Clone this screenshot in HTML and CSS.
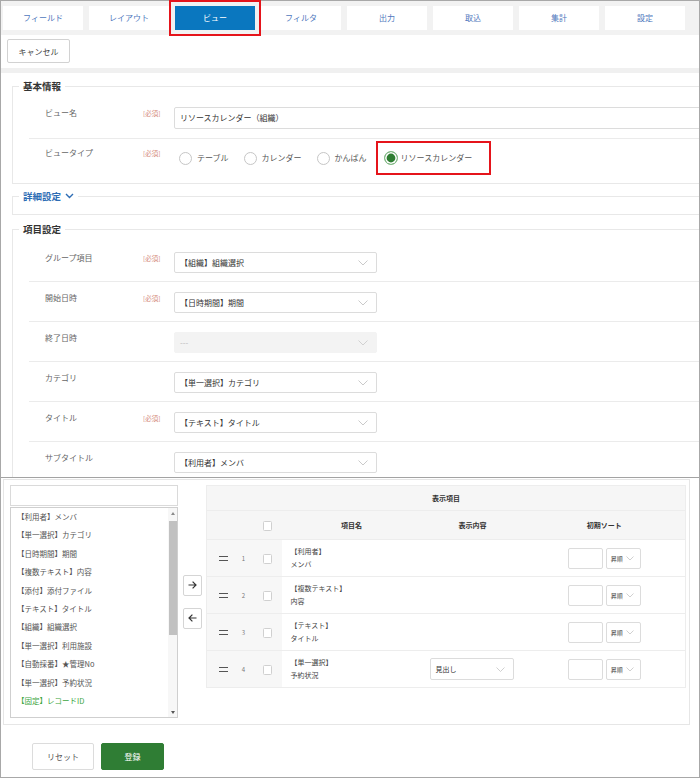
FILE: index.html
```html
<!DOCTYPE html>
<html lang="ja">
<head>
<meta charset="utf-8">
<title>ビュー設定</title>
<link rel="stylesheet" href="styles.css">
</head>
<body>
<div class="frame">
  <div class="upper">
    <nav class="tabs">
      <a class="tab">フィールド</a>
      <a class="tab">レイアウト</a>
      <a class="tab active">ビュー</a>
      <a class="tab">フィルタ</a>
      <a class="tab">出力</a>
      <a class="tab">取込</a>
      <a class="tab">集計</a>
      <a class="tab">設定</a>
    </nav>
    <div class="toolbar"><button class="btn cancel">キャンセル</button></div>
    <div class="content">
      <fieldset class="group basic">
        <legend>基本情報</legend>
        <div class="row">
          <div class="label">ビュー名</div>
          <div class="req">[必須]</div>
          <div class="field">リソースカレンダー（組織）</div>
        </div>
        <div class="row">
          <div class="label">ビュータイプ</div>
          <div class="req">[必須]</div>
          <div class="radios">
            <span class="radio-item"><span class="radio"></span>テーブル</span>
            <span class="radio-item"><span class="radio"></span>カレンダー</span>
            <span class="radio-item"><span class="radio"></span>かんばん</span>
            <span class="radio-item marked"><span class="radio on"></span>リソースカレンダー</span>
          </div>
        </div>
      </fieldset>
      <fieldset class="group collapsed">
        <legend class="link">詳細設定 <svg class="legend-chev" width="9" height="6" viewBox="0 0 9 6"><path d="M1 1L4.5 4.5L8 1" fill="none" stroke="#2d6cb4" stroke-width="1.4"/></svg></legend>
      </fieldset>
      <fieldset class="group items">
        <legend>項目設定</legend>
        <div class="row">
          <div class="label">グループ項目</div>
          <div class="req">[必須]</div>
          <div class="select"><span>【組織】組織選択</span><svg width="10" height="6" viewBox="0 0 10 6"><path d="M0.5 0.5L5 5L9.5 0.5" fill="none" stroke="#bdbdbd" stroke-width="0.8"/></svg></div>
        </div>
        <div class="row">
          <div class="label">開始日時</div>
          <div class="req">[必須]</div>
          <div class="select"><span>【日時期間】期間</span><svg width="10" height="6" viewBox="0 0 10 6"><path d="M0.5 0.5L5 5L9.5 0.5" fill="none" stroke="#bdbdbd" stroke-width="0.8"/></svg></div>
        </div>
        <div class="row">
          <div class="label">終了日時</div>
          <div class="req"></div>
          <div class="select disabled"><span>---</span><svg width="10" height="6" viewBox="0 0 10 6"><path d="M0.5 0.5L5 5L9.5 0.5" fill="none" stroke="#c8c8c8" stroke-width="0.8"/></svg></div>
        </div>
        <div class="row">
          <div class="label">カテゴリ</div>
          <div class="req"></div>
          <div class="select"><span>【単一選択】カテゴリ</span><svg width="10" height="6" viewBox="0 0 10 6"><path d="M0.5 0.5L5 5L9.5 0.5" fill="none" stroke="#bdbdbd" stroke-width="0.8"/></svg></div>
        </div>
        <div class="row">
          <div class="label">タイトル</div>
          <div class="req">[必須]</div>
          <div class="select"><span>【テキスト】タイトル</span><svg width="10" height="6" viewBox="0 0 10 6"><path d="M0.5 0.5L5 5L9.5 0.5" fill="none" stroke="#bdbdbd" stroke-width="0.8"/></svg></div>
        </div>
        <div class="row">
          <div class="label">サブタイトル</div>
          <div class="req"></div>
          <div class="select"><span>【利用者】メンバ</span><svg width="10" height="6" viewBox="0 0 10 6"><path d="M0.5 0.5L5 5L9.5 0.5" fill="none" stroke="#bdbdbd" stroke-width="0.8"/></svg></div>
        </div>
      </fieldset>
    </div>
  </div>

  <div class="lower">
    <div class="card">
      <div class="picker">
        <div class="search"></div>
        <div class="listbox">
          <div class="list">
            <div class="item">【利用者】メンバ</div>
            <div class="item">【単一選択】カテゴリ</div>
            <div class="item">【日時期間】期間</div>
            <div class="item">【複数テキスト】内容</div>
            <div class="item">【添付】添付ファイル</div>
            <div class="item">【テキスト】タイトル</div>
            <div class="item">【組織】組織選択</div>
            <div class="item">【単一選択】利用施設</div>
            <div class="item">【自動採番】★管理No</div>
            <div class="item">【単一選択】予約状況</div>
            <div class="item fixed">【固定】レコードID</div>
          </div>
          <div class="scrollbar">
            <span class="sb-up"></span>
            <span class="sb-track"><span class="sb-thumb"></span></span>
            <span class="sb-down"></span>
          </div>
        </div>
      </div>
      <div class="movers">
        <button class="move"><svg width="9" height="8" viewBox="0 0 9 8"><path d="M0.5 4H8M4.6 0.6L8 4L4.6 7.4" fill="none" stroke="#333" stroke-width="1.2"/></svg></button>
        <button class="move"><svg width="9" height="8" viewBox="0 0 9 8"><path d="M8.5 4H1M4.4 0.6L1 4L4.4 7.4" fill="none" stroke="#333" stroke-width="1.2"/></svg></button>
      </div>
      <table class="cols">
        <colgroup>
          <col class="c-grip"><col class="c-num"><col class="c-chk"><col class="c-name"><col class="c-disp"><col class="c-sort">
        </colgroup>
        <thead>
          <tr class="h1"><th colspan="6">表示項目</th></tr>
          <tr class="h2"><th></th><th></th><th><span class="cb"></span></th><th>項目名</th><th>表示内容</th><th>初期ソート</th></tr>
        </thead>
        <tbody>
          <tr>
            <td class="grip"><span class="grip-icon"></span></td><td class="num">1</td><td class="chk"><span class="cb"></span></td>
            <td class="name">【利用者】<br>メンバ</td><td class="disp"></td>
            <td class="sort"><div class="sort-box"><span class="sort-in"></span><span class="sort-sel">昇順<svg width="8" height="5" viewBox="0 0 8 5"><path d="M0.5 0.5L4 4L7.5 0.5" fill="none" stroke="#c4c4c4" stroke-width="0.8"/></svg></span></div></td>
          </tr>
          <tr>
            <td class="grip"><span class="grip-icon"></span></td><td class="num">2</td><td class="chk"><span class="cb"></span></td>
            <td class="name">【複数テキスト】<br>内容</td><td class="disp"></td>
            <td class="sort"><div class="sort-box"><span class="sort-in"></span><span class="sort-sel">昇順<svg width="8" height="5" viewBox="0 0 8 5"><path d="M0.5 0.5L4 4L7.5 0.5" fill="none" stroke="#c4c4c4" stroke-width="0.8"/></svg></span></div></td>
          </tr>
          <tr>
            <td class="grip"><span class="grip-icon"></span></td><td class="num">3</td><td class="chk"><span class="cb"></span></td>
            <td class="name">【テキスト】<br>タイトル</td><td class="disp"></td>
            <td class="sort"><div class="sort-box"><span class="sort-in"></span><span class="sort-sel">昇順<svg width="8" height="5" viewBox="0 0 8 5"><path d="M0.5 0.5L4 4L7.5 0.5" fill="none" stroke="#c4c4c4" stroke-width="0.8"/></svg></span></div></td>
          </tr>
          <tr>
            <td class="grip"><span class="grip-icon"></span></td><td class="num">4</td><td class="chk"><span class="cb"></span></td>
            <td class="name">【単一選択】<br>予約状況</td>
            <td class="disp"><div class="disp-sel"><span>見出し</span><svg width="9" height="5" viewBox="0 0 9 5"><path d="M0.5 0.5L4.5 4.5L8.5 0.5" fill="none" stroke="#c4c4c4" stroke-width="0.8"/></svg></div></td>
            <td class="sort"><div class="sort-box"><span class="sort-in"></span><span class="sort-sel">昇順<svg width="8" height="5" viewBox="0 0 8 5"><path d="M0.5 0.5L4 4L7.5 0.5" fill="none" stroke="#c4c4c4" stroke-width="0.8"/></svg></span></div></td>
          </tr>
        </tbody>
      </table>
    </div>
    <div class="actions">
      <button class="btn reset">リセット</button>
      <button class="btn primary">登録</button>
    </div>
  </div>
</div>
</body>
</html>
```

FILE: styles.css
```css
* { box-sizing: border-box; }
html, body { margin: 0; padding: 0; background: #fff; }
body {
  font-family: "Noto Sans CJK JP", "Noto Sans", sans-serif;
  font-size: 8px;
  color: #444;
}

.frame {
  width: 700px;
  height: 778px;
  border: 1px solid #a8a8a8;
  background: #fff;
}

.upper {
  height: 477px;
  border-bottom: 1px solid #a3a3a3;
  display: flex;
  flex-direction: column;
}

/* tabs */
.tabs {
  display: flex;
  gap: 6px;
  height: 34px;
  padding: 5px 0 0 2px;
  background: #f2f2f2;
  flex: none;
}
.tab {
  width: 80px;
  height: 24px;
  line-height: 24px;
  background: #fff;
  color: #4f78bd;
  text-align: center;
  font-size: 8px;
}
.tab.active {
  background: #0a77bf;
  color: #fff;
  outline: 2px solid #e5141b;
  outline-offset: 4px;
}

/* toolbar */
.toolbar {
  height: 33px;
  padding: 4px 6px;
  flex: none;
}
.btn {
  font-family: inherit;
  font-size: 8px;
  background: #fff;
  border: 1px solid #d2d2d2;
  border-radius: 2px;
  color: #444;
  padding: 0;
  cursor: pointer;
}
.btn.cancel { width: 63px; height: 24px; }

/* content */
.content {
  flex: 1;
  border-top: 5px solid #f0f0f0;
  padding-left: 11px;
  overflow: hidden;
}

.group {
  margin: 6px 0 0;
  padding: 6px 0 5px;
  border: 1px solid #e8e8e8;
  width: 760px;
  min-width: 0;
}
.group legend {
  margin-left: 6px;
  padding: 0 4px;
  font-size: 9.5px;
  font-weight: 700;
  line-height: 14px;
  color: #333;
}
.group.collapsed { margin-top: 5px; padding: 0 0 11px; }
.group.items { margin-top: 7px; }
.group legend.link { color: #2d6cb4; }
.legend-chev { margin-left: 2px; vertical-align: 1px; }

.row {
  display: flex;
  align-items: flex-start;
  margin-left: 16px;
  padding: 8px 0 9px;
}
.row + .row { border-top: 1px solid #ebebeb; }
.items .row { padding: 10px 0 8px; }

.label {
  width: 114px;
  padding-left: 16px;
  line-height: 12px;
  color: #666;
  flex: none;
}
.req {
  width: 31px;
  font-size: 6.5px;
  line-height: 12px;
  color: #d48a7b;
  flex: none;
}
.field {
  width: 540px;
  height: 22px;
  border: 1px solid #dcdcdc;
  border-radius: 2px;
  padding: 0 5px;
  line-height: 20px;
  color: #333;
  flex: none;
}

.radios {
  display: flex;
  align-items: center;
  height: 22px;
  padding-left: 5px;
  color: #555;
}
.radio-item {
  display: flex;
  align-items: center;
  margin-right: 15px;
  line-height: 14px;
}
.radio {
  width: 13px;
  height: 13px;
  border: 1px solid #c6c6c6;
  border-radius: 50%;
  background: #fff;
  margin-right: 5px;
}
.radio.on {
  width: 14px;
  height: 14px;
  border: 1px solid #86bd89;
  background: #2e7d32;
  box-shadow: inset 0 0 0 1.6px #fff;
  margin-right: 3px;
}
.radio-item.marked { position: relative; margin-left: 2px; }
.radio-item.marked::after {
  content: "";
  position: absolute;
  left: -8px;
  right: -19px;
  top: -10px;
  bottom: -10px;
  border: 2px solid #e5141b;
}

.select {
  width: 203px;
  height: 21px;
  border: 1px solid #dcdcdc;
  border-radius: 2px;
  display: flex;
  align-items: center;
  justify-content: space-between;
  padding: 0 8px 0 5px;
  color: #333;
  flex: none;
}
.select.disabled {
  background: #f3f3f3;
  border-color: #f3f3f3;
  color: #bbb;
}

/* lower area */
.lower { height: 299px; }
.card {
  margin: 1px 9px 0 2px;
  border: 1px solid #e6e6e6;
  padding: 5px 4px 6px 6px;
  display: flex;
  align-items: flex-start;
}

.picker { width: 168px; flex: none; }
.search {
  height: 21px;
  border: 1px solid #dadada;
}
.listbox {
  margin-top: 1px;
  height: 211px;
  border: 1px solid #cfcfcf;
  display: flex;
}
.list { flex: 1; padding-left: 6px; }
.item {
  line-height: 18.4px;
  font-size: 7.5px;
  color: #555;
  white-space: nowrap;
}
.item.fixed { color: #3da63f; }

.scrollbar {
  width: 9px;
  display: flex;
  flex-direction: column;
  align-items: center;
  background: #f7f7f7;
}
.sb-up, .sb-down {
  height: 10px;
  width: 9px;
  display: flex;
  align-items: center;
  justify-content: center;
}
.sb-up::before {
  content: "";
  border-left: 2.5px solid transparent;
  border-right: 2.5px solid transparent;
  border-bottom: 3px solid #8a8a8a;
}
.sb-down::before {
  content: "";
  border-left: 2.5px solid transparent;
  border-right: 2.5px solid transparent;
  border-top: 3px solid #555;
}
.sb-track { flex: 1; width: 9px; padding-top: 3px; }
.sb-thumb {
  display: block;
  width: 8px;
  margin: 0 auto;
  height: 114px;
  background: #c1c1c1;
}

.movers {
  align-self: center;
  margin-left: 5px;
  width: 19px;
  display: flex;
  flex-direction: column;
  gap: 12px;
  flex: none;
}
.move {
  width: 19px;
  height: 21px;
  border: 1px solid #d5d5d5;
  border-radius: 2px;
  background: #fff;
  padding: 0;
  display: flex;
  align-items: center;
  justify-content: center;
}

.cols {
  margin-left: 4px;
  width: 479px;
  border-collapse: collapse;
  table-layout: fixed;
  border: 1px solid #ededed;
  font-size: 7px;
  flex: none;
}
.c-grip { width: 27px; }
.c-num { width: 20px; }
.c-chk { width: 28px; }
.c-name { width: 140px; }
.c-disp { width: 102px; }
.c-sort { width: 162px; }

.cols th {
  background: #f6f6f6;
  font-weight: 700;
  color: #333;
  text-align: center;
  padding: 0;
}
.cols .h1 th { height: 25px; }
.cols .h2 th { height: 29px; border-top: 1px solid #ededed; }
.cols td {
  height: 37px;
  border-top: 1px solid #ededed;
  padding: 0;
  vertical-align: middle;
}
.cols td.grip, .cols td.num, .cols td.chk { background: #f7f7f7; }
.grip { text-align: left; padding-left: 12px !important; }
.grip-icon {
  display: block;
  width: 9px;
  height: 5px;
  border-top: 1.5px solid #555;
  border-bottom: 1.5px solid #555;
}
.num { text-align: center; color: #777; font-size: 6px; }
.chk { text-align: center; }
.cb {
  display: inline-block;
  width: 9px;
  height: 10px;
  border: 1px solid #d0d0d0;
  border-radius: 1.5px;
  background: #fff;
  vertical-align: middle;
}
.name {
  padding-left: 9px !important;
  line-height: 13px;
  color: #444;
}
.disp { padding-left: 8px !important; }
.disp-sel {
  width: 84px;
  height: 22px;
  border: 1px solid #dcdcdc;
  border-radius: 2px;
  display: flex;
  align-items: center;
  justify-content: space-between;
  padding: 0 8px 0 5px;
  color: #333;
}
.sort-box {
  display: flex;
  justify-content: center;
  gap: 3px;
}
.sort-in {
  width: 35px;
  height: 21px;
  border: 1px solid #dcdcdc;
  border-radius: 2px;
}
.sort-sel {
  width: 35px;
  height: 21px;
  border: 1px solid #dcdcdc;
  border-radius: 2px;
  display: flex;
  align-items: center;
  gap: 3px;
  padding-left: 4px;
  font-size: 6px;
  color: #444;
}

.actions {
  margin-top: 18px;
  padding-left: 31px;
  display: flex;
  gap: 7px;
}
.btn.reset { width: 62px; height: 27px; color: #555; border-color: #dcdcdc; }
.btn.primary {
  width: 63px;
  height: 27px;
  background: #2f7d34;
  border-color: #2f7d34;
  color: #fff;
}
```
